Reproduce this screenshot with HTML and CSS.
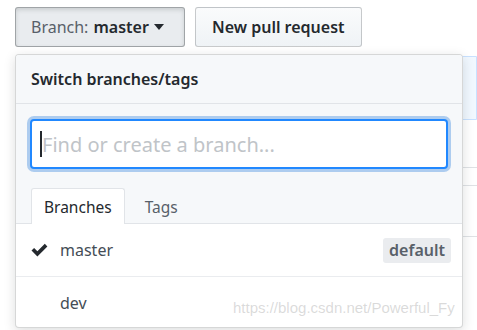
FILE: index.html
```html
<!DOCTYPE html>
<html lang="en">
<head>
    <meta charset="UTF-8">
    <title>Switch branches</title>
    <link rel="stylesheet" href="styles.css">
</head>
<body>
    <div class="toolbar">
        <button class="btn btn-selected">
            <span class="muted">Branch:</span> <span class="branch-name">master</span>
            <span class="caret"></span>
        </button>
        <button class="btn">New pull request</button>
    </div>

    <div class="repo-content">
        <div class="commit-bar"></div>
        <div class="file-row"></div>
        <div class="file-row"></div>
        <div class="file-row tall"></div>
        <div class="readme-title">hello world</div>
    </div>

    <div class="select-menu">
        <div class="menu-header">Switch branches/tags</div>
        <div class="menu-filter">
            <div class="filter-input">
                <span class="cursor"></span>
                <span class="placeholder">Find or create a branch...</span>
            </div>
        </div>
        <div class="menu-tabs">
            <div class="tab tab-active">Branches</div>
            <div class="tab">Tags</div>
        </div>
        <div class="menu-item">
            <svg class="check" width="19" height="16" viewBox="0 0 19 16">
                <path d="M1.5 8.5l2.6-2.6 3.3 3.3 7.4-7.4 2.6 2.6-10 10z"></path>
            </svg>
            <span class="item-name">master</span>
            <span class="label">default</span>
        </div>
        <div class="menu-item">
            <span class="item-name">dev</span>
        </div>
    </div>

    <div class="watermark">https://blog.csdn.net/Powerful_Fy</div>
</body>
</html>
```

FILE: styles.css
```css
body {
    margin: 0;
    font-family: 'Segoe UI', 'Noto Sans', 'Open Sans', sans-serif;
    color: #24292e;
    background: #fff;
    position: relative;
    height: 330px;
    overflow: hidden;
}
.toolbar {
    display: flex;
    gap: 10px;
    padding: 7px 0 0 15px;
}
.btn {
    height: 40px;
    padding: 0 16px;
    font-family: inherit;
    font-size: 16px;
    font-weight: 600;
    color: #24292e;
    background: linear-gradient(#fafbfc, #eff3f6);
    border: 1px solid rgba(27, 31, 35, 0.22);
    border-radius: 3px;
    display: flex;
    align-items: center;
}
.btn-selected {
    width: 170px;
    padding: 0 15px;
    background: #e9ecef;
    border-color: rgba(27, 31, 35, 0.35);
    box-shadow: inset 0 2px 4px rgba(27, 31, 35, 0.15);
    font-weight: 400;
}
.muted {
    color: #586069;
    margin-right: 5px;
}
.branch-name {
    font-weight: 600;
}
.caret {
    display: inline-block;
    margin-left: 5px;
    border-top: 6px solid #24292e;
    border-left: 5px solid transparent;
    border-right: 5px solid transparent;
}
.repo-content {
    padding: 9px 0 0 15px;
}
.commit-bar {
    height: 62px;
    background: #f1f8ff;
    border: 1px solid #c8e1ff;
    border-radius: 3px 0 0 3px;
}
.file-row {
    height: 47px;
    border-bottom: 1px solid #dfe2e5;
}
.file-row:nth-child(3) {
    height: 17px;
}
.file-row.tall {
    height: 50px;
}
.readme-title {
    margin: 90px 0 0 118px;
    font-size: 32px;
    font-weight: 700;
    line-height: 1;
}
.select-menu {
    position: absolute;
    z-index: 2;
    top: 54px;
    left: 15px;
    width: 446px;
    height: 272px;
    background: #fff;
    border: 1px solid rgba(27, 31, 35, 0.18);
    border-radius: 4px;
    box-shadow: 0 3px 12px rgba(27, 31, 35, 0.15);
    overflow: hidden;
}
.menu-header {
    height: 48px;
    padding: 0 15px;
    display: flex;
    align-items: center;
    font-size: 16px;
    font-weight: 600;
    background: #f6f8fa;
    border-bottom: 1px solid #e1e4e8;
}
.menu-filter {
    padding: 15px 14px 14px;
    background: #f6f8fa;
}
.filter-input {
    height: 46px;
    background: #fff;
    border: 2px solid #2188ff;
    border-radius: 4px;
    box-shadow: 0 0 0 3px rgba(3, 102, 214, 0.3);
    display: flex;
    align-items: center;
    padding-left: 8px;
}
.cursor {
    width: 2px;
    height: 26px;
    background: #24292e;
}
.placeholder {
    font-size: 20px;
    color: #c0c4c8;
}
.menu-tabs {
    display: flex;
    padding: 0 15px;
    height: 40px;
    align-items: flex-end;
    background: #f6f8fa;
    border-bottom: 1px solid #e1e4e8;
}
.tab {
    height: 34px;
    padding: 0 12px;
    display: flex;
    align-items: center;
    font-size: 15.5px;
    color: #586069;
    margin-bottom: -1px;
    border: 1px solid transparent;
    border-bottom: 0;
    border-radius: 3px 3px 0 0;
}
.tab-active {
    color: #24292e;
    background: #fff;
    border-color: #e1e4e8;
    padding: 0 12px;
    height: 35px;
    margin-right: 7px;
}
.menu-item {
    height: 52px;
    display: flex;
    align-items: center;
    padding: 0 11px 0 44px;
    position: relative;
    font-size: 16px;
    color: #444d56;
    border-bottom: 1px solid #eaecef;
}
.check {
    position: absolute;
    left: 14px;
    top: 18px;
    fill: #24292e;
}
.item-name {
    flex: 1;
}
.label {
    font-size: 16px;
    font-weight: 600;
    color: #586069;
    background: #eaecef;
    border-radius: 3px;
    padding: 1px 6px 2px;
}
.watermark {
    position: absolute;
    z-index: 3;
    left: 233px;
    top: 299px;
    font-family: 'Liberation Sans', Arial, sans-serif;
    font-size: 15px;
    color: rgba(150, 150, 150, 0.35);
}
```
